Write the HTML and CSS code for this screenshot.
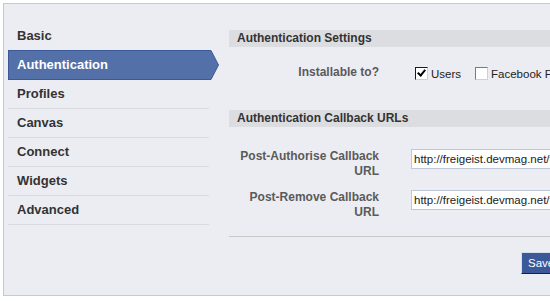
FILE: index.html
```html
<!DOCTYPE html>
<html lang="en">
<head>
<meta charset="UTF-8">
<title>Application Settings - Authentication</title>
<link rel="stylesheet" href="styles.css">
</head>
<body>

<div class="panel">
    <ul class="nav">
        <li class="nav-item">Basic</li>
        <li class="nav-item active">
            <span class="nav-label">Authentication</span>
            <svg class="nav-tip" width="11" height="30" viewBox="0 0 11 30">
                <polygon points="0,0.5 3,0.5 10.5,15 3,29.5 0,29.5" fill="#5470a8"/>
                <polyline points="0,0.5 3,0.5 10.5,15 3,29.5 0,29.5" fill="none" stroke="#3b5998" stroke-width="1"/>
            </svg>
        </li>
        <li class="nav-item">Profiles</li>
        <li class="nav-item">Canvas</li>
        <li class="nav-item">Connect</li>
        <li class="nav-item">Widgets</li>
        <li class="nav-item">Advanced</li>
    </ul>

    <div class="content">
        <div class="section first">
            <h3 class="section-head">Authentication Settings</h3>
            <div class="row">
                <div class="row-label">Installable to?</div>
                <div class="row-field checks">
                    <label class="check"><input type="checkbox" checked> Users</label>
                    <label class="check"><input type="checkbox"> Facebook Pages</label>
                </div>
            </div>
        </div>

        <div class="section">
            <h3 class="section-head">Authentication Callback URLs</h3>
            <div class="row url-row">
                <div class="row-label">Post-Authorise Callback URL</div>
                <div class="row-field"><input type="text" class="url" value="http://freigeist.devmag.net/facebook/authorise"></div>
            </div>
            <div class="row url-row second">
                <div class="row-label">Post-Remove Callback URL</div>
                <div class="row-field"><input type="text" class="url" value="http://freigeist.devmag.net/facebook/remove"></div>
            </div>
        </div>

        <div class="actions">
            <button class="save-btn">Save Changes</button>
        </div>
    </div>
</div>

</body>
</html>
```

FILE: styles.css
```css
body { margin:0; background:#fff; font-family: "Liberation Sans", Arial, sans-serif; color:#333; overflow:hidden; }

.panel { display:flex; margin:3px 0 0 3px; height:291px; width:700px; border:1px solid #c9c9c9; border-right:none; background:#ecedf2; padding-left:4px; }

/* left menu */
.nav { list-style:none; margin:18px 20px 0 0; padding:0; width:201px; flex:none; }
.nav-item { height:28px; line-height:28px; padding-left:9px; border-bottom:1px solid #d9dbe1; font-size:13px; font-weight:bold; color:#333; }
.nav-item.active { display:flex; height:30px; margin:-1px -10px 0 0; padding:0; border:none; color:#fff; }
.nav-label { flex:1; height:28px; line-height:28px; padding-left:8px; background:#5470a8; border:1px solid #3b5998; border-right:none; }
.nav-tip { flex:none; display:block; }

/* right side */
.content { width:400px; padding-top:26px; }
.section-head { margin:0; height:17px; line-height:17px; padding-left:8px; background:#dcdde1; font-size:12px; font-weight:bold; color:#333; }
.section.first { padding-bottom:30px; }

.row { display:flex; align-items:flex-start; margin-top:18px; }
.row-label { width:150px; flex:none; text-align:right; font-size:12px; font-weight:bold; color:#5a5a5a; line-height:15px; }
.row-field { margin-left:32px; }

.checks { display:flex; align-items:center; padding-top:2px; font-size:11.5px; color:#222; }
.check { display:flex; align-items:center; margin-right:10px; }
.check input { appearance:none; -webkit-appearance:none; width:13px; height:13px; margin:0 3px 0 4px; background:#fff; border:1px solid #7a7a7a; border-right-color:#d4d0c8; border-bottom-color:#d4d0c8; position:relative; }
.check input:checked { border-color:#1c1c1c #d4d0c8 #d4d0c8 #1c1c1c; }
.check input:checked::after { content:""; position:absolute; left:3px; top:0px; width:3px; height:6px; border:solid #000; border-width:0 2px 2px 0; transform:rotate(40deg); }

.url-row { margin-top:22px; }
.url-row.second { margin-top:11px; }
.url { width:250px; height:20px; box-sizing:border-box; padding:0 2px; border:1px solid #bdc7d8; background:#fff; font-family: "Liberation Sans", Arial, sans-serif; font-size:11.5px; color:#222; }

.actions { margin-top:16px; padding-top:15px; border-top:1px solid #c9c9c9; }
.save-btn { margin-left:292px; height:22px; padding:0 6px; background:#3b5998; color:#fff; border:1px solid; border-color:#d9dfea #0e1f5b #0e1f5b #d9dfea; font-family: "Liberation Sans", Arial, sans-serif; font-size:11.5px; cursor:pointer; }
```
